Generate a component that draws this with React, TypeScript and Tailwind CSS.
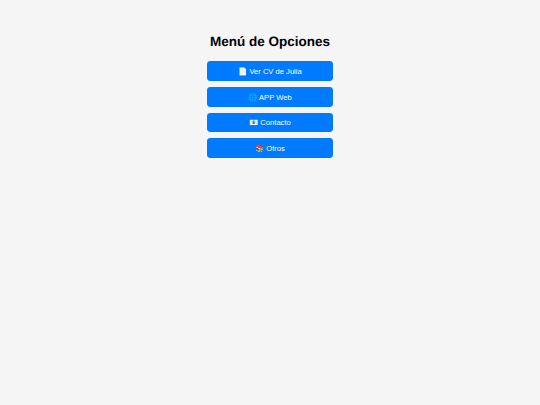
const items = ["📄 Ver CV de Julia", "🌐 APP Web", "📧 Contacto", "📚 Otros"];

export default function App() {
  return (
    <div className="min-h-[405px] bg-[#f5f5f5] pt-[32.6px] font-['Liberation_Sans',Arial,sans-serif] [text-rendering:geometricPrecision]">
      <div className="flex flex-col items-center">
        <h1 className="mb-[10.6px] text-[13.5px] leading-[18px] font-bold text-black">Menú de Opciones</h1>
        <div className="flex flex-col gap-[6px]">
          {items.map((item) => (
            <button key={item} className="h-[19.7px] w-[126.5px] rounded-[3.4px] bg-[#007bff] pt-[1px] text-[7.6px] text-white">
              {item}
            </button>
          ))}
        </div>
      </div>
    </div>
  );
}
